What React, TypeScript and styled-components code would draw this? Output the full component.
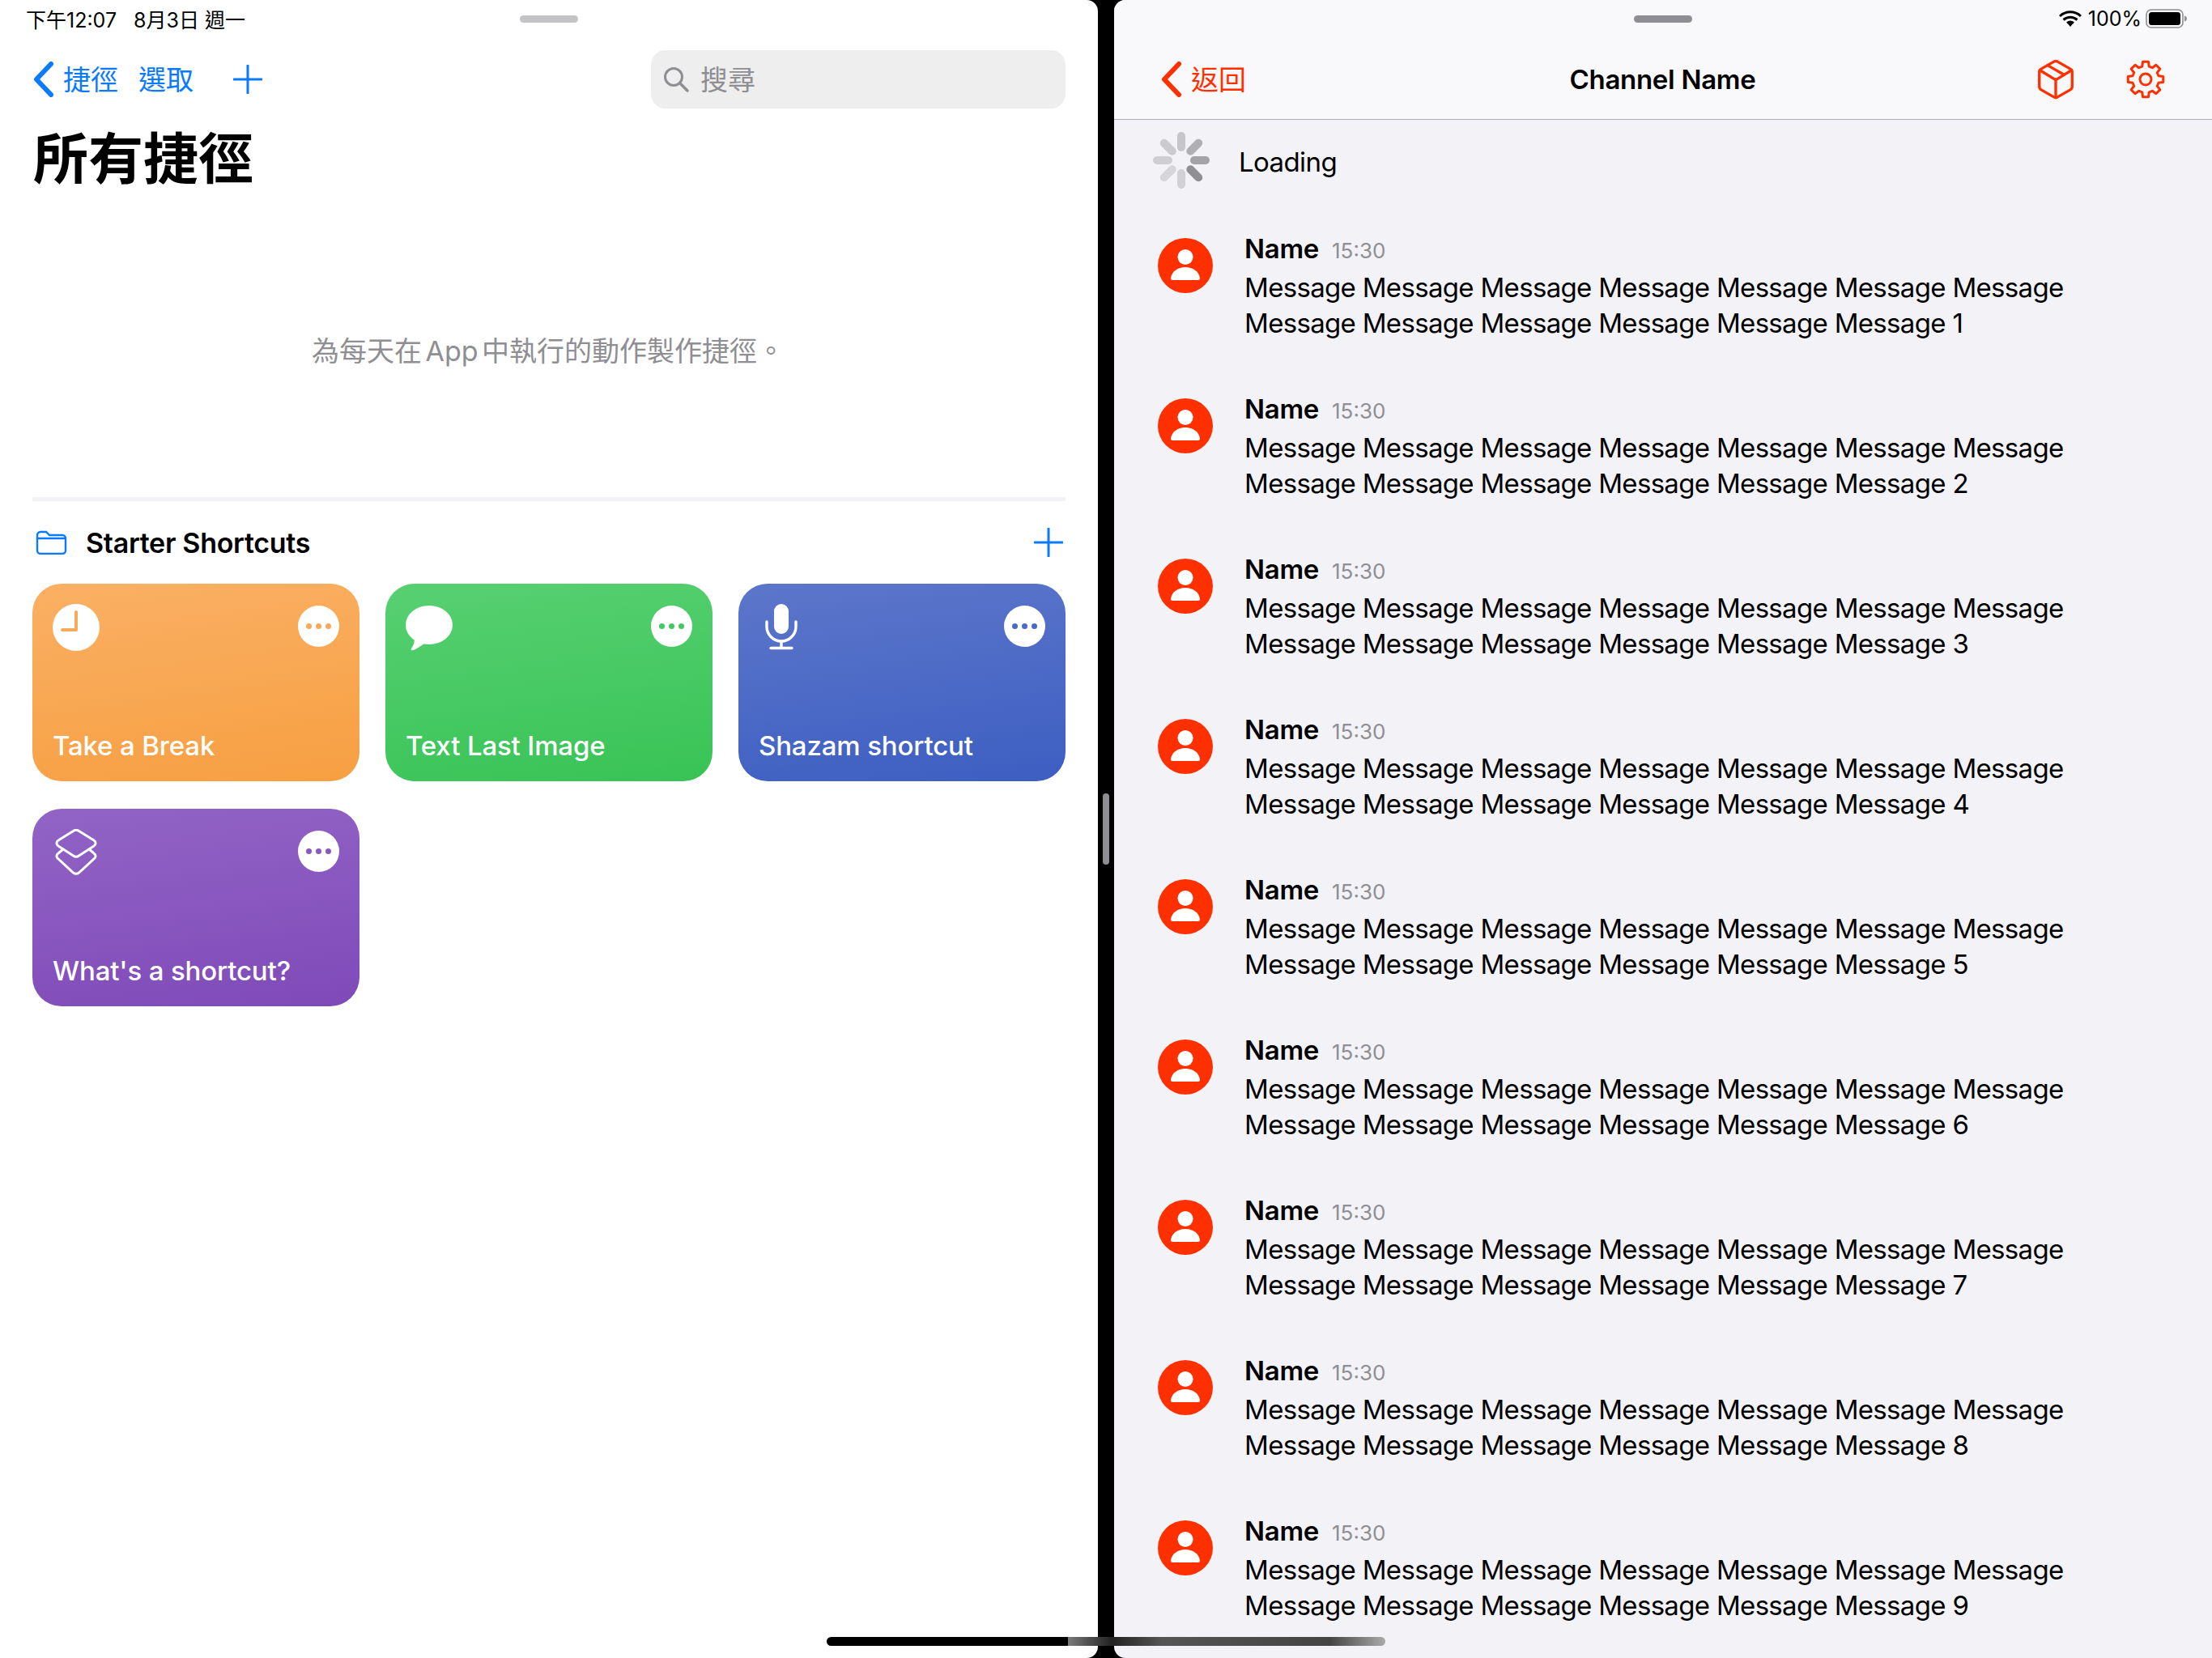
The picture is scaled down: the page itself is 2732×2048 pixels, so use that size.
import React from "react";
import styled, { createGlobalStyle } from "styled-components";
import { LuPackage } from "react-icons/lu";

const SANS = `Inter, "Noto Sans CJK TC", sans-serif`;
const BLUE = "#0a7aff";
const RED = "#ff3000";

const GlobalStyle = createGlobalStyle`
    html, body {
        margin: 0;
        padding: 0;
        background: #000;
        font-family: ${SANS};
    }
`;

const Screen = styled.div`
    position: relative;
    width: 2732px;
    height: 2048px;
    display: flex;
    overflow: hidden;
    background: #000;
`;

const LeftPane = styled.div`
    width: 1356px;
    height: 2048px;
    flex: none;
    box-sizing: border-box;
    padding: 0 40px;
    background: #fff;
    border-radius: 0 14px 14px 0;
`;

const RightPane = styled.div`
    width: 1356px;
    height: 2048px;
    flex: none;
    background: #f2f2f7;
    border-radius: 14px 0 0 14px;
    overflow: hidden;
`;

const Splitter = styled.div`
    width: 20px;
    flex: none;
    display: flex;
    align-items: center;
    justify-content: center;
`;

const SplitterHandle = styled.div`
    width: 8px;
    height: 88px;
    border-radius: 4px;
    background: #8e8e93;
`;

const StatusRow = styled.div`
    height: 46px;
    display: grid;
    grid-template-columns: 1fr 72px 1fr;
    align-items: center;
    font-size: 25px;
    color: #000;
`;

const StatusLeft = styled.div`
    margin-left: -8px;
    display: flex;
    gap: 21px;
`;

const StatusRight = styled.div`
    display: flex;
    justify-content: flex-end;
    align-items: center;
    gap: 8px;
`;

const StatusPercent = styled.span`
    margin-right: -3px;
`;

const Grabber = styled.div<{ $color: string }>`
    width: 72px;
    height: 9px;
    border-radius: 5px;
    background: ${(p) => p.$color};
`;

const LeftNav = styled.div`
    height: 76px;
    margin-top: 14px;
    display: flex;
    align-items: center;
    color: ${BLUE};
    font-size: 34px;
`;

const NavBack = styled.div<{ $color: string }>`
    margin-left: 1px;
    display: flex;
    align-items: center;
    gap: 11px;
    color: ${(p) => p.$color};
    font-size: 34px;
`;

const NavText = styled.span`
    margin-bottom: 3px;
`;

const NavLabel = styled(NavText)`
    margin-left: 25px;
`;

const NavPlus = styled.span`
    display: flex;
    margin-left: 49px;
`;

const SearchBox = styled.div`
    margin-left: auto;
    width: 512px;
    height: 72px;
    box-sizing: border-box;
    padding: 0 14px;
    display: flex;
    align-items: center;
    gap: 13px;
    border-radius: 18px;
    background: #eeeeef;
    color: #8e8e93;
    font-size: 34px;
`;

const Title = styled.h1`
    margin: 18px 0 0 1px;
    font-size: 68px;
    line-height: 84px;
    font-weight: 700;
    color: #000;
`;

const EmptyText = styled.div`
    margin-top: 172px;
    height: 48px;
    line-height: 48px;
    text-align: center;
    font-size: 34px;
    word-spacing: -5px;
    color: #8e8e93;
    padding-right: 2px;
`;

const Rule = styled.div`
    margin-top: 156px;
    height: 5px;
    background: #f2f2f7;
`;

const SectionHeader = styled.div`
    margin-top: 28px;
    padding-left: 4px;
    height: 46px;
    display: flex;
    align-items: center;
    color: #000;
    font-size: 34px;
    font-weight: 600;
`;

const SectionName = styled.span`
    margin-left: 23px;
    letter-spacing: -0.3px;
`;

const SectionPlus = styled.span`
    margin-left: auto;
    margin-right: 3px;
    display: flex;
`;

const CardGrid = styled.div`
    margin-top: 28px;
    display: grid;
    grid-template-columns: repeat(3, 404px);
    grid-auto-rows: 244px;
    column-gap: 32px;
    row-gap: 34px;
`;

const Card = styled.div<{ $from: string; $to: string }>`
    box-sizing: border-box;
    padding: 25px 25px 22px;
    border-radius: 36px;
    display: flex;
    flex-direction: column;
    justify-content: space-between;
    color: #fff;
    background: linear-gradient(172deg, ${(p) => p.$from}, ${(p) => p.$to});
`;

const CardTop = styled.div`
    display: flex;
    justify-content: space-between;
    align-items: flex-start;
`;

const CardIcon = styled.div`
    width: 58px;
    height: 58px;
    display: flex;
`;

const MoreButton = styled.div<{ $color: string }>`
    width: 51px;
    height: 51px;
    margin-top: 2px;
    border-radius: 50%;
    background: #fff;
    display: flex;
    align-items: center;
    justify-content: center;
    gap: 5px;
    color: ${(p) => p.$color};
`;

const MoreDot = styled.span`
    width: 7px;
    height: 7px;
    border-radius: 50%;
    background: currentColor;
`;

const CardLabel = styled.div`
    font-size: 33px;
    line-height: 44px;
    font-weight: 500;
    letter-spacing: -0.15px;
`;

const RightHeader = styled.div`
    height: 148px;
    box-sizing: border-box;
    padding: 0 30px;
    background: #f9f9fb;
    border-bottom: 1px solid #b1b1b3;
`;

const RightNav = styled.div`
    height: 76px;
    margin-top: 14px;
    padding: 0 28px 0 27px;
    display: grid;
    grid-template-columns: 1fr auto 1fr;
    align-items: center;
`;

const NavTitle = styled.div`
    font-size: 33px;
    font-weight: 600;
    letter-spacing: -0.3px;
    color: #000;
`;

const NavActions = styled.div`
    display: flex;
    justify-content: flex-end;
    align-items: center;
    gap: 60px;
    color: ${RED};
`;

const LoadingRow = styled.div`
    height: 100px;
    padding-left: 47px;
    display: flex;
    align-items: center;
    gap: 35px;
    color: #000;
`;

const LoadingText = styled.span`
    margin-top: 4px;
    font-size: 33px;
    letter-spacing: -0.6px;
`;

const MessageList = styled.div`
    margin-top: 39px;
    padding-left: 54px;
    display: flex;
    flex-direction: column;
    gap: 64px;
`;

const MessageRow = styled.div`
    display: flex;
    gap: 39px;
`;

const Avatar = styled.div`
    width: 68px;
    height: 68px;
    margin-top: 7px;
    flex: none;
`;

const MessageBody = styled.div`
    width: 1024px;
    color: #000;
`;

const MessageHead = styled.div`
    height: 42px;
    display: flex;
    align-items: baseline;
    gap: 16px;
`;

const Name = styled.span`
    font-size: 33px;
    font-weight: 600;
    letter-spacing: -0.3px;
`;

const Time = styled.span`
    font-size: 26px;
    color: #8e8e93;
`;

const MessageText = styled.div`
    margin-top: 4px;
    font-size: 33px;
    line-height: 44px;
    letter-spacing: -0.68px;
`;

const HomeBar = styled.div`
    position: absolute;
    left: 1021px;
    top: 2022px;
    width: 690px;
    height: 11px;
    border-radius: 6px;
    background: linear-gradient(90deg, #000 0, #000 43.2%, #7a7a7a 43.2%, #222 51%, #555 60%, #444 90%, #aaa 100%);
`;

const Chevron = ({ color }: { color: string }) => (
    <svg width="26" height="44" viewBox="0 0 26 44">
        <path d="M22 3 4 22l18 19" fill="none" stroke={color} strokeWidth="6" strokeLinecap="round" strokeLinejoin="round" />
    </svg>
);

const Plus = ({ size }: { size: number }) => (
    <svg width={size} height={size} viewBox="0 0 36 36">
        <path d="M18 1v34M1 18h34" fill="none" stroke={BLUE} strokeWidth="3" strokeLinecap="round" />
    </svg>
);

const SearchIcon = () => (
    <svg width="34" height="34" viewBox="0 0 34 34">
        <circle cx="14" cy="14" r="10.5" fill="none" stroke="#8e8e93" strokeWidth="3" />
        <path d="m22 22 9 9" stroke="#8e8e93" strokeWidth="3.500" strokeLinecap="round" />
    </svg>
);

const FolderIcon = () => (
    <svg width="39" height="30" viewBox="0 0 39 30">
        <path d="M2 6a4 4 0 0 1 4-4h7l4 4h16a4 4 0 0 1 4 4v15a4 4 0 0 1-4 4H6a4 4 0 0 1-4-4zM2 10h35" fill="none" stroke={BLUE} strokeWidth="2.4" />
    </svg>
);

const ClockIcon = ({ color }: { color: string }) => (
    <svg width="58" height="58" viewBox="0 0 58 58">
        <circle cx="29" cy="29" r="29" fill="#fff" />
        <path d="M29 10v22H12" fill="none" stroke={color} strokeWidth="4" strokeLinecap="round" strokeLinejoin="round" />
    </svg>
);

const BubbleIcon = () => (
    <svg width="58" height="58" viewBox="0 0 58 58">
        <ellipse cx="29" cy="26" rx="29" ry="24" fill="#fff" />
        <path d="M10 40c2 6 0 11-3 15-1 2 0 3 2 2 5-1 9-5 14-8z" fill="#fff" />
    </svg>
);

const MicIcon = () => (
    <svg width="58" height="58" viewBox="0 0 58 58">
        <rect x="19" y="0" width="18" height="37" rx="9" fill="#fff" />
        <path d="M10 22v6a18 18 0 0 0 36 0v-6M28 46v8M15 54.500h26" fill="none" stroke="#fff" strokeWidth="3.400" strokeLinecap="round" />
    </svg>
);

const LayersIcon = () => (
    <svg width="58" height="58" viewBox="0 0 58 58">
        <path d="M25.500 2.500a6 6 0 0 1 7 0L51 14a4 4 0 0 1 0 7L32.500 33a6 6 0 0 1-7 0L7 21a4 4 0 0 1 0-7z" fill="none" stroke="#fff" strokeWidth="3" />
        <path d="M13 25 7 30a4 4 0 0 0 0 7l18.500 17a6 6 0 0 0 7 0L51 37a4 4 0 0 0 0-7l-6-5" fill="none" stroke="#fff" strokeWidth="3" />
    </svg>
);

const WifiIcon = () => (
    <svg width="28" height="20" viewBox="0 0 28 20">
        <path d="M1 7a19 19 0 0 1 26 0M5.500 11.500a13 13 0 0 1 17 0M10 15.500a7 7 0 0 1 8 0" fill="none" stroke="#000" strokeWidth="3" />
        <path d="m14 20-3-3.500a5 5 0 0 1 6 0z" fill="#000" />
    </svg>
);

const BatteryIcon = () => (
    <svg width="52" height="24" viewBox="0 0 52 24">
        <rect x="1" y="1" width="45" height="22" rx="6" fill="none" stroke="#8e8e93" strokeWidth="1.600" />
        <rect x="4" y="4" width="39" height="16" rx="3.500" fill="#000" />
        <path d="M48 8.500c2 .5 3 2 3 3.500s-1 3-3 3.500z" fill="#8e8e93" />
    </svg>
);

// 8 toothed outline, points worked out around the centre of a 48 box
const gearPath = (() => {
    const pts: string[] = [];
    const polar = (r: number, deg: number) => {
        const a = (deg * Math.PI) / 180;
        return `${(24 + r * Math.cos(a)).toFixed(2)} ${(24 + r * Math.sin(a)).toFixed(2)}`;
    };
    for (let i = 0; i < 8; i++) {
        const c = i * 45 - 90;
        pts.push(polar(22, c - 9), polar(22, c + 9), polar(16.5, c + 15), polar(16.5, c + 30));
    }
    return `M${pts.join("L")}z`;
})();

const GearIcon = () => (
    <svg width="48" height="48" viewBox="0 0 48 48">
        <path d={gearPath} fill="none" stroke={RED} strokeWidth="3" strokeLinejoin="round" />
        <circle cx="24" cy="24" r="7" fill="none" stroke={RED} strokeWidth="3" />
    </svg>
);

const spokeColors = ["#c6c6ca", "#b0b0b4", "#a4a4a8", "#8f8f94", "#d2d2d6", "#d6d6da", "#cfcfd3", "#cbcbcf"];

const Spinner = () => (
    <svg width="72" height="72" viewBox="-36 -36 72 72">
        {spokeColors.map((color, i) => (
            <rect key={i} x="-5" y="-35" width="10" height="24" rx="5" fill={color} transform={`rotate(${i * 45})`} />
        ))}
    </svg>
);

const AvatarIcon = () => (
    <svg width="68" height="68" viewBox="0 0 68 68">
        <circle cx="34" cy="34" r="34" fill={RED} />
        <circle cx="34" cy="23.500" r="9.500" fill="#fff" />
        <path d="M16 50c1-9 9-14 18-14s17 5 18 14c0 1-1 2-2 2H18c-1 0-2-1-2-2z" fill="#fff" />
    </svg>
);

const cards = [
    { label: "Take a Break", from: "#fab064", to: "#f79f42", more: "#f9a95a", icon: <ClockIcon color="#f9a95a" /> },
    { label: "Text Last Image", from: "#58d072", to: "#38c356", more: "#45c862", icon: <BubbleIcon /> },
    { label: "Shazam shortcut", from: "#5c76ca", to: "#3d5ec2", more: "#4d69c6", icon: <MicIcon /> },
    { label: "What's a shortcut?", from: "#9264c6", to: "#7f4ab8", more: "#8a58c0", icon: <LayersIcon /> },
];

const messages = [1, 2, 3, 4, 5, 6, 7, 8, 9];

const App = () => (
    <Screen>
        <GlobalStyle />
        <LeftPane>
            <StatusRow>
                <StatusLeft>
                    <span>下午12:07</span>
                    <span>8月3日 週一</span>
                </StatusLeft>
                <Grabber $color="#c4c4c6" />
                <span />
            </StatusRow>
            <LeftNav>
                <NavBack $color={BLUE}>
                    <Chevron color={BLUE} />
                    <NavText>捷徑</NavText>
                </NavBack>
                <NavLabel>選取</NavLabel>
                <NavPlus>
                    <Plus size={36} />
                </NavPlus>
                <SearchBox>
                    <SearchIcon />
                    <NavText>搜尋</NavText>
                </SearchBox>
            </LeftNav>
            <Title>所有捷徑</Title>
            <EmptyText>為每天在 App 中執行的動作製作捷徑。</EmptyText>
            <Rule />
            <SectionHeader>
                <FolderIcon />
                <SectionName>Starter Shortcuts</SectionName>
                <SectionPlus>
                    <Plus size={36} />
                </SectionPlus>
            </SectionHeader>
            <CardGrid>
                {cards.map((c) => (
                    <Card key={c.label} $from={c.from} $to={c.to}>
                        <CardTop>
                            <CardIcon>{c.icon}</CardIcon>
                            <MoreButton $color={c.more}>
                                <MoreDot />
                                <MoreDot />
                                <MoreDot />
                            </MoreButton>
                        </CardTop>
                        <CardLabel>{c.label}</CardLabel>
                    </Card>
                ))}
            </CardGrid>
        </LeftPane>
        <Splitter>
            <SplitterHandle />
        </Splitter>
        <RightPane>
            <RightHeader>
                <StatusRow>
                    <span />
                    <Grabber $color="#8e8e93" />
                    <StatusRight>
                        <WifiIcon />
                        <StatusPercent>100%</StatusPercent>
                        <BatteryIcon />
                    </StatusRight>
                </StatusRow>
                <RightNav>
                    <NavBack $color={RED}>
                        <Chevron color={RED} />
                        <NavText>返回</NavText>
                    </NavBack>
                    <NavTitle>Channel Name</NavTitle>
                    <NavActions>
                        <LuPackage size={54} strokeWidth={1.5} />
                        <GearIcon />
                    </NavActions>
                </RightNav>
            </RightHeader>
            <LoadingRow>
                <Spinner />
                <LoadingText>Loading</LoadingText>
            </LoadingRow>
            <MessageList>
                {messages.map((n) => (
                    <MessageRow key={n}>
                        <Avatar>
                            <AvatarIcon />
                        </Avatar>
                        <MessageBody>
                            <MessageHead>
                                <Name>Name</Name>
                                <Time>15:30</Time>
                            </MessageHead>
                            <MessageText>{`${"Message ".repeat(13)}${n}`}</MessageText>
                        </MessageBody>
                    </MessageRow>
                ))}
            </MessageList>
        </RightPane>
        <HomeBar />
    </Screen>
);

export default App;
